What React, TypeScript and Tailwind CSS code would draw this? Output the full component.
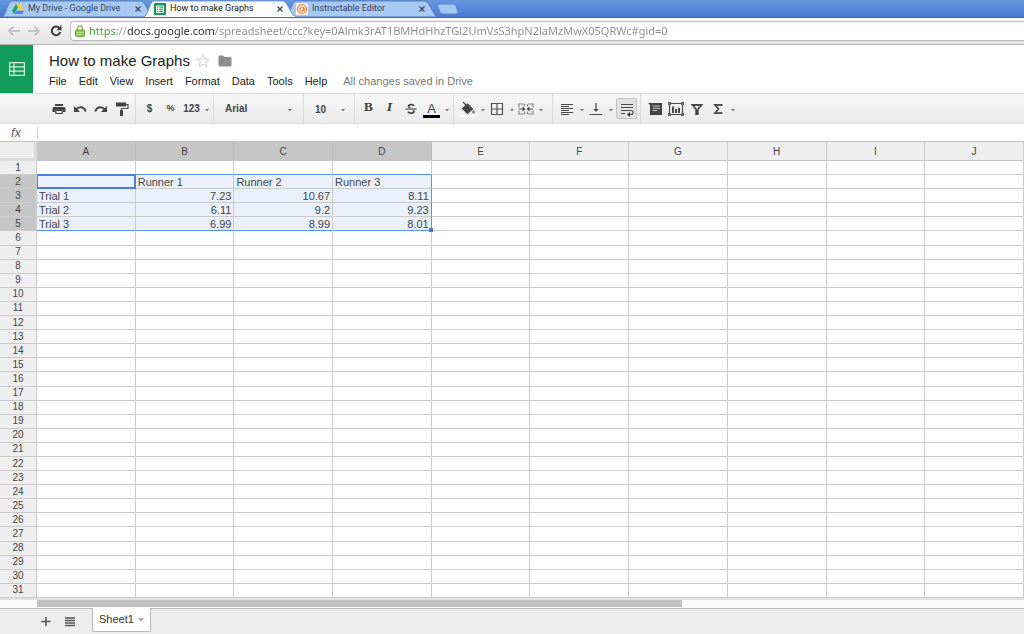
import type { ReactNode } from 'react';
import clsx from 'clsx';

const COLUMNS = ['A', 'B', 'C', 'D', 'E', 'F', 'G', 'H', 'I', 'J'];
const ROW_COUNT = 31;
const MENUS = ['File', 'Edit', 'View', 'Insert', 'Format', 'Data', 'Tools', 'Help'];

const CELLS: Record<string, string> = {
  B2: 'Runner 1',
  C2: 'Runner 2',
  D2: 'Runner 3',
  A3: 'Trial 1',
  B3: '7.23',
  C3: '10.67',
  D3: '8.11',
  A4: 'Trial 2',
  B4: '6.11',
  C4: '9.2',
  D4: '9.23',
  A5: 'Trial 3',
  B5: '6.99',
  C5: '8.99',
  D5: '8.01',
};

// Current selection is A2:D5
const isSelectedCol = (col: number) => col <= 3;
const isSelectedRow = (row: number) => row >= 2 && row <= 5;

/* ---------- Browser chrome ---------- */

function DriveIcon() {
  return (
    <svg viewBox="0 0 12 12" className="size-3 shrink-0">
      <path d="M4 1h4l4 6.500H8z" fill="#f9cf3c" />
      <path d="M4 1l2 3.300L2 11 0 7.700z" fill="#1fa463" />
      <path d="M4 7.700h8L10 11H2z" fill="#4688f4" />
    </svg>
  );
}

function SheetsIcon() {
  return (
    <svg viewBox="0 0 12 12" className="size-3 shrink-0">
      <rect width="12" height="12" rx="1" fill="#149a58" />
      <path d="M2.500 3h7v6.500h-7zM2.500 5.200h7M2.500 7.300h7M4.800 3v6.500" fill="none" stroke="#fff" />
    </svg>
  );
}

function InstructablesIcon() {
  return (
    <svg viewBox="0 0 12 12" className="size-3 shrink-0">
      <rect width="12" height="12" fill="#fbeee4" />
      <circle cx="6" cy="6" r="4.500" fill="none" stroke="#ee8044" strokeWidth="1.200" />
      <circle cx="6" cy="6" r="2" fill="none" stroke="#ee8044" strokeWidth="1.200" />
      <path d="M8 4.500v3l1.500.5" fill="none" stroke="#ee8044" />
    </svg>
  );
}

interface BrowserTabProps {
  title: string;
  icon: ReactNode;
  active?: boolean;
}

function BrowserTab({ title, icon, active }: BrowserTabProps) {
  return (
    <div className={clsx('relative flex w-[142px] items-center pr-1 pl-2', active && 'z-10')}>
      <svg
        viewBox="0 0 154 18"
        preserveAspectRatio="none"
        className="absolute inset-y-0 -left-0.5 h-full w-[152px]"
      >
        <path
          d="M0 18C4 17 5 2 10 1H141C146 2 149 17 154 18Z"
          fill={active ? '#fbfcfe' : '#a9c9f5'}
          stroke={active ? '#6d8fc9' : '#5379bb'}
        />
        {active && <path d="M1 18h152" stroke="#fbfcfe" strokeWidth="2" />}
      </svg>
      <button className="relative flex min-w-0 flex-1 items-center gap-1 text-left whitespace-nowrap">
        {icon}
        <span className={clsx('text-[9px]', active ? 'text-[#222]' : 'text-[#33415c]')}>{title}</span>
      </button>
      <button aria-label={`Close ${title}`} className="relative flex size-2 items-center">
        <svg viewBox="0 0 8 8" className="size-2">
          <path d="M1.500 1.500l5 5M6.500 1.500l-5 5" stroke="#3d4a63" strokeWidth="1.300" />
        </svg>
      </button>
    </div>
  );
}

function BrowserBar() {
  return (
    <div>
      <div className="flex h-[18px] border-b border-[#3f6cb8] bg-linear-to-b from-[#6498de] to-[#4a7ad2] pl-1 font-[Roboto,sans-serif]">
        <BrowserTab title="My Drive - Google Drive" icon={<DriveIcon />} />
        <BrowserTab title="How to make Graphs" icon={<SheetsIcon />} active />
        <BrowserTab title="Instructable Editor" icon={<InstructablesIcon />} />
        <button aria-label="New tab" className="ml-1.5 flex items-center">
          <svg viewBox="0 0 24 12" className="h-3 w-6">
            <path d="M2 1h15q2 0 3 2l2 6q0 2-2 2H7q-2 0-3-2L1 2z" fill="#a5c6f4" stroke="#5b82c8" />
          </svg>
        </button>
      </div>
      <div className="flex h-[27px] items-center border-b border-[#b5b5b5] bg-linear-to-b from-[#f8f8f8] to-[#e4e4e4] pl-1">
        <button aria-label="Back" className="flex w-5 justify-center">
          <svg viewBox="0 0 14 12" className="h-3 w-3.5" fill="none" stroke="#c3c3c3" strokeWidth="1.800">
            <path d="M13 6H2M6.500 1.500L2 6l4.500 4.500" />
          </svg>
        </button>
        <button aria-label="Forward" className="flex w-5 justify-center">
          <svg viewBox="0 0 14 12" className="h-3 w-3.5" fill="none" stroke="#c3c3c3" strokeWidth="1.800">
            <path d="M1 6h11M7.500 1.500L12 6l-4.500 4.500" />
          </svg>
        </button>
        <button aria-label="Reload" className="ml-0.5 flex w-5 justify-center">
          <svg viewBox="0 0 12 12" className="size-3" fill="none" stroke="#3c3c3c" strokeWidth="2">
            <path d="M9.500 3.200A4.300 4.300 0 1 0 10.300 7" />
            <path d="M11.500 0v5.200H6.300z" fill="#3c3c3c" stroke="none" />
          </svg>
        </button>
        <div className="ml-1 flex h-5 flex-1 items-center gap-1 rounded-l-sm border border-r-0 border-[#b9b9b9] bg-white pl-1">
          <svg viewBox="0 0 10 12" className="h-3 w-2.5 shrink-0">
            <path d="M2.500 6V3.500a2.500 2.500 0 0 1 5 0V6" fill="none" stroke="#8fae6a" strokeWidth="1.400" />
            <rect x=".5" y="5" width="9" height="6.500" rx="1" fill="#8cc751" stroke="#6aa235" />
            <path d="M1.500 7.500h7M1.500 9.500h7" stroke="#b7e08a" />
          </svg>
          {/* Protocol, host and path each take their own colour */}
          <input
            aria-label="Address"
            className="w-full bg-[linear-gradient(to_right,#35a035_0,#35a035_30px,#999_30px,#999_38px,#2b2b2b_38px,#2b2b2b_126px,#8c8c8c_126px)] bg-clip-text font-['Noto_Sans',sans-serif] text-[11px] text-transparent outline-none"
            defaultValue="https://docs.google.com/spreadsheet/ccc?key=0Almk3rAT1BMHdHhzTGl2UmVsS3hpN2laMzMwX05QRWc#gid=0"
          />
        </div>
      </div>
    </div>
  );
}

/* ---------- Document header ---------- */

function DocHeader() {
  return (
    <header className="flex h-12 bg-white">
      <a
        href="#sheets"
        aria-label="Sheets home"
        className="flex w-[33px] items-center justify-center bg-[#0f9d58]"
      >
        <svg viewBox="0 0 16 14" className="h-3.5 w-4" fill="none" stroke="#d5f0e1" strokeWidth="1.200">
          <path d="M.6.600h14.800v12.800H.6zM.6 4.900h14.800M.6 9.100h14.800M5 .6v12.800" />
        </svg>
      </a>
      <div className="flex flex-col pt-2 pl-4">
        <div className="flex h-4 items-center">
          <h1 className="text-[15px] leading-4 text-[#222]">How to make Graphs</h1>
          <button aria-label="Star" className="ml-1.5">
            <svg viewBox="0 0 14 14" className="size-3.5">
              <path
                d="M7 .8l1.700 4.300 4.500.2-3.500 2.900 1.200 4.500L7 10.200l-3.900 2.500 1.200-4.500L.8 5.300l4.500-.2z"
                fill="none"
                stroke="#cdcdcd"
              />
            </svg>
          </button>
          <button aria-label="Move to folder" className="ml-2">
            <svg viewBox="0 0 14 12" className="h-3 w-3.5">
              <path d="M.5.500H5L6.500 2h6q1 0 1 1v7.500q0 1-1 1h-11q-1 0-1-1z" fill="#8f8f8f" />
            </svg>
          </button>
        </div>
        <nav className="mt-1 flex h-4 items-center gap-3 text-[11px] text-[#222]">
          {MENUS.map((menu) => (
            <button key={menu}>{menu}</button>
          ))}
          <span className="ml-1 text-[#777]">All changes saved in Drive</span>
        </nav>
      </div>
    </header>
  );
}

/* ---------- Toolbar ---------- */

function Caret() {
  return (
    <svg viewBox="0 0 6 4" className="h-1 w-1.5 shrink-0">
      <path d="M1 1h4L3 3.200z" fill="#777" />
    </svg>
  );
}

interface ToolProps {
  label: string;
  caret?: boolean;
  pressed?: boolean;
  children: ReactNode;
}

function Tool({ label, caret, pressed, children }: ToolProps) {
  return (
    <button
      aria-label={label}
      className={clsx(
        'flex h-[21px] items-center justify-center',
        caret ? 'w-[29px]' : 'w-[21px]',
        pressed && 'ml-0.5 rounded-xs border border-[#c4c4c4] bg-[#e2e2e2]',
      )}
    >
      <span className="flex w-[21px] justify-center">{children}</span>
      {caret && (
        <span className="flex w-2 justify-end pt-0.5">
          <Caret />
        </span>
      )}
    </button>
  );
}

function Icon({ children }: { children: ReactNode }) {
  return (
    <svg viewBox="0 0 16 16" className="size-4 shrink-0" fill="none" stroke="#4a4a4a" strokeWidth="1.200">
      {children}
    </svg>
  );
}

const groupClass = 'flex h-full items-center border-r border-[#dcdcdc] px-[3px]';

function Toolbar() {
  return (
    <div className="flex h-[31px] items-center border-y border-[#dcdcdc] bg-linear-to-b from-[#f6f6f6] to-[#ececec] pl-[45px] text-[10px] font-bold text-[#444]">
      <div className={groupClass}>
        <Tool label="Print">
          <Icon>
            <path d="M4 3h8v2H4zM3 6h10q1.500 0 1.500 1.500V11H12V9H4v2H1.500V7.500Q1.500 6 3 6z" fill="#444" stroke="none" />
            <path d="M4.800 9.500h6.400v3H4.800z" fill="#f2f2f2" />
          </Icon>
        </Tool>
        <Tool label="Undo">
          <Icon>
            <path d="M4 8.500C7 5 12 5.500 13.800 10.500" strokeWidth="2" />
            <path d="M2 5v6h6z" fill="#444" stroke="none" />
          </Icon>
        </Tool>
        <Tool label="Redo">
          <Icon>
            <path d="M12 8.500C9 5 4 5.500 2.200 10.500" strokeWidth="2" />
            <path d="M14 5v6H8z" fill="#444" stroke="none" />
          </Icon>
        </Tool>
        <Tool label="Paint format">
          <Icon>
            <path d="M2 1.500h10v4H2zM6 9h3v6H6z" fill="#444" stroke="none" />
            <path d="M12 3.500h2v4H7.500V10" />
          </Icon>
        </Tool>
      </div>
      <div className={groupClass}>
        <Tool label="Format as currency">$</Tool>
        <Tool label="Format as percent">
          <span className="text-[9px]">%</span>
        </Tool>
        <Tool label="More formats" caret>
          123
        </Tool>
      </div>
      <div className="relative flex h-full w-[90px] items-center border-r border-[#dcdcdc]">
        <select aria-label="Font" className="w-full appearance-none pl-[11px] outline-none">
          <option>Arial</option>
        </select>
        <span className="pointer-events-none absolute right-2.5 flex pt-0.5">
          <Caret />
        </span>
      </div>
      <div className="relative flex h-full w-[51px] items-center border-r border-[#dcdcdc] pt-0.5">
        <select aria-label="Font size" className="w-full appearance-none pl-[11px] outline-none">
          <option>10</option>
        </select>
        <span className="pointer-events-none absolute right-2 flex">
          <Caret />
        </span>
      </div>
      <div className={groupClass}>
        <Tool label="Bold">
          <span className="font-['DejaVu_Serif',serif] text-[11px]">B</span>
        </Tool>
        <Tool label="Italic">
          <span className="font-['DejaVu_Serif',serif] text-[11px] italic">I</span>
        </Tool>
        <Tool label="Strikethrough">
          <Icon>
            <path
              d="M11 4.800C10 3.200 5.500 3 5.500 5.500c0 2 5.500 2 5.500 4.500 0 2.800-5 2.500-6 .6"
              strokeWidth="1.800"
            />
            <path d="M2.500 8h11" stroke="#f1f1f1" strokeWidth="2.600" />
            <path d="M2.500 8h11" />
          </Icon>
        </Tool>
        <Tool label="Text color" caret>
          <span className="mt-1 w-[17px] border-b-3 border-black text-[13px] leading-3 font-normal">A</span>
        </Tool>
      </div>
      <div className={clsx(groupClass, 'pr-2')}>
        <Tool label="Fill color" caret>
          <Icon>
            <path d="M2.500 7.500L7.500 3l5 5-5 4.500z" fill="#444" />
            <path d="M3 1l5 5" />
            <path d="M13.500 8.500q3 4 0 4t0-4z" fill="#888" stroke="none" />
            <path d="M0 15h16" stroke="#fff" strokeWidth="2" />
          </Icon>
        </Tool>
        <Tool label="Borders" caret>
          <Icon>
            <path d="M2.500 2.500h11v11h-11zM8 2.500v11M2.500 8h11" stroke="#555" />
          </Icon>
        </Tool>
        <Tool label="Merge cells" caret>
          <Icon>
            <path d="M6 3H1v3.500M1 9.500V13h5M10 3h5v3.500M15 9.500V13h-5" stroke="#888" />
            <path d="M6.500 3v2.500M6.500 10.500V13M9.500 3v2.500M9.500 10.500V13" stroke="#888" />
            <path d="M1 8h4M15 8h-4" />
            <path d="M4.500 5.500L7.500 8l-3 2.500zM11.500 5.500L8.500 8l3 2.500z" fill="#444" stroke="none" />
          </Icon>
        </Tool>
      </div>
      <div className={groupClass}>
        <Tool label="Horizontal align" caret>
          <Icon>
            <path d="M2 3.500h12M2 5.500h8M2 7.500h12M2 9.500h8M2 11.500h12M2 13.500h8" strokeWidth="1" />
          </Icon>
        </Tool>
        <Tool label="Vertical align" caret>
          <Icon>
            <path d="M1.500 13.500h13M8 2v7" />
            <path d="M5.500 8h5L8 11z" fill="#444" stroke="none" />
          </Icon>
        </Tool>
        <Tool label="Wrap text" pressed>
          <Icon>
            <path d="M2 3.500h12M2 6.500h12M2 9.500h10a1.800 1.800 0 0 1 0 4h-2M2 12.500h4" />
            <path d="M11 11v5l-3-2.500z" fill="#333" stroke="none" />
          </Icon>
        </Tool>
      </div>
      <div className="flex h-full items-center pl-[3px]">
        <Tool label="Insert comment">
          <Icon>
            <path d="M1 2h14v12H3V4z" fill="#444" stroke="none" />
            <path d="M5.500 5h7.500M5.500 7.300h7.500M5.500 9.500h4.500" stroke="#ccc" strokeWidth="1" />
          </Icon>
        </Tool>
        <Tool label="Insert chart">
          <Icon>
            <path d="M1.500 2.500h13v11h-13z" />
            <path d="M5 5.500V12M8 8v4M11 7v5" strokeWidth="2" />
            <path d="M0 1h3v3H0zM13 1h3v3h-3zM0 12h3v3H0zM13 12h3v3h-3z" fill="#666" stroke="none" />
          </Icon>
        </Tool>
        <Tool label="Filter">
          <Icon>
            <path d="M3.500 4h9L8.800 8.500V13H7.200V8.500z" strokeWidth="1.800" />
          </Icon>
        </Tool>
        <Tool label="Functions" caret>
          <Icon>
            <path d="M11.500 5V3.800H5L8.500 8 5 12.200h6.500V11" strokeWidth="1.700" />
          </Icon>
        </Tool>
      </div>
    </div>
  );
}

/* ---------- Sheet grid ---------- */

function Cell({ row, col }: { row: number; col: number }) {
  const value = CELLS[COLUMNS[col] + row];
  const selected = isSelectedRow(row) && isSelectedCol(col);
  const active = row === 2 && col === 0;

  return (
    <td
      className={clsx(
        'relative border-r border-b p-0 px-0.5 text-[11px] leading-3 text-[#444]',
        selected ? 'bg-[#eaf1fd]' : 'bg-white',
        selected && col === 3 ? 'border-r-[#5b92ea]' : 'border-r-[#cbcbcb]',
        isSelectedCol(col) && (row === 1 || row === 5) ? 'border-b-[#5b92ea]' : 'border-b-[#cbcbcb]',
        value && !Number.isNaN(Number(value)) && 'text-right',
      )}
    >
      {value}
      {active && <span className="absolute -inset-px left-0 border-2 border-l border-[#4a80dd]" />}
      {row === 5 && col === 3 && (
        <span className="absolute -right-0.5 -bottom-0.5 z-10 size-1 bg-[#3f76d6]" />
      )}
    </td>
  );
}

function SheetGrid() {
  const rows = Array.from({ length: ROW_COUNT }, (_, i) => i + 1);

  return (
    <div className="grid min-h-0 flex-1">
      <table className="h-full w-full table-fixed border-separate border-spacing-0">
        <colgroup>
          <col className="w-[37px]" />
          {COLUMNS.map((name) => (
            <col key={name} />
          ))}
        </colgroup>
        <thead>
          <tr className="h-5 text-[10px] text-[#444]">
            <td className="border-t border-r-3 border-b-3 border-t-[#c4c4c4] border-r-[#dadada] border-b-[#dadada] bg-[#eee] p-0" />
            {COLUMNS.map((name, col) => (
              <th
                key={name}
                className={clsx(
                  'border-t border-r border-b border-t-[#c4c4c4] border-b-[#c4c4c4] p-0 font-normal',
                  isSelectedCol(col) ? 'border-r-[#bbb] bg-[#c6c6c6]' : 'border-r-[#cbcbcb] bg-[#eee]',
                )}
              >
                {name}
              </th>
            ))}
          </tr>
        </thead>
        <tbody>
          {rows.map((row) => (
            <tr key={row}>
              <th
                className={clsx(
                  'border-r border-b border-[#cbcbcb] p-0 text-[10px] leading-3 font-normal text-[#444]',
                  isSelectedRow(row) ? 'bg-[#c6c6c6]' : 'bg-[#eee]',
                )}
              >
                {row}
              </th>
              {COLUMNS.map((name, col) => (
                <Cell key={name} row={row} col={col} />
              ))}
            </tr>
          ))}
        </tbody>
      </table>
    </div>
  );
}

function SheetTabs() {
  return (
    <footer>
      <div className="flex h-[10px] border-t-2 border-t-[#e2e2e2] bg-[#fafafa] pl-[37px]">
        <div className="h-[7px] w-[65.4%] bg-[#c2c2c2]" />
      </div>
      <div className="flex h-[26px] items-start border-t border-[#b8b8b8] bg-[#ededed] pl-9">
        <button aria-label="Add sheet" className="mt-1.5 flex w-5 justify-center">
          <svg viewBox="0 0 12 12" className="size-3">
            <path d="M6 2v9M1.500 6.500h9" stroke="#555" strokeWidth="1.500" />
          </svg>
        </button>
        <button aria-label="All sheets" className="mt-1.5 ml-1 flex w-5 justify-center">
          <svg viewBox="0 0 12 12" className="size-3">
            <path d="M1 3h10M1 5.500h10M1 8h10M1 10.500h10" stroke="#555" strokeWidth="1.400" />
          </svg>
        </button>
        <button className="-mt-px ml-3 flex h-6 items-center gap-1 rounded-b-xs border border-t-0 border-[#b8b8b8] bg-white px-1.5 text-[11px] text-[#333]">
          Sheet1
          <svg viewBox="0 0 6 4" className="h-1 w-1.5">
            <path d="M0 0h6L3 4z" fill="#aaa" />
          </svg>
        </button>
      </div>
    </footer>
  );
}

export default function App() {
  return (
    <div className="flex h-screen flex-col overflow-hidden bg-white font-['Liberation_Sans',Arial,sans-serif]">
      <BrowserBar />
      <DocHeader />
      <Toolbar />
      <div className="flex h-[17px] items-center">
        <label htmlFor="formula" className="w-[37px] pl-[11px] text-[13px] leading-3 text-[#666] italic">
          fx
        </label>
        <input id="formula" className="h-3 flex-1 border-l border-[#ccc] px-1 text-[11px] outline-none" />
      </div>
      <SheetGrid />
      <SheetTabs />
    </div>
  );
}
